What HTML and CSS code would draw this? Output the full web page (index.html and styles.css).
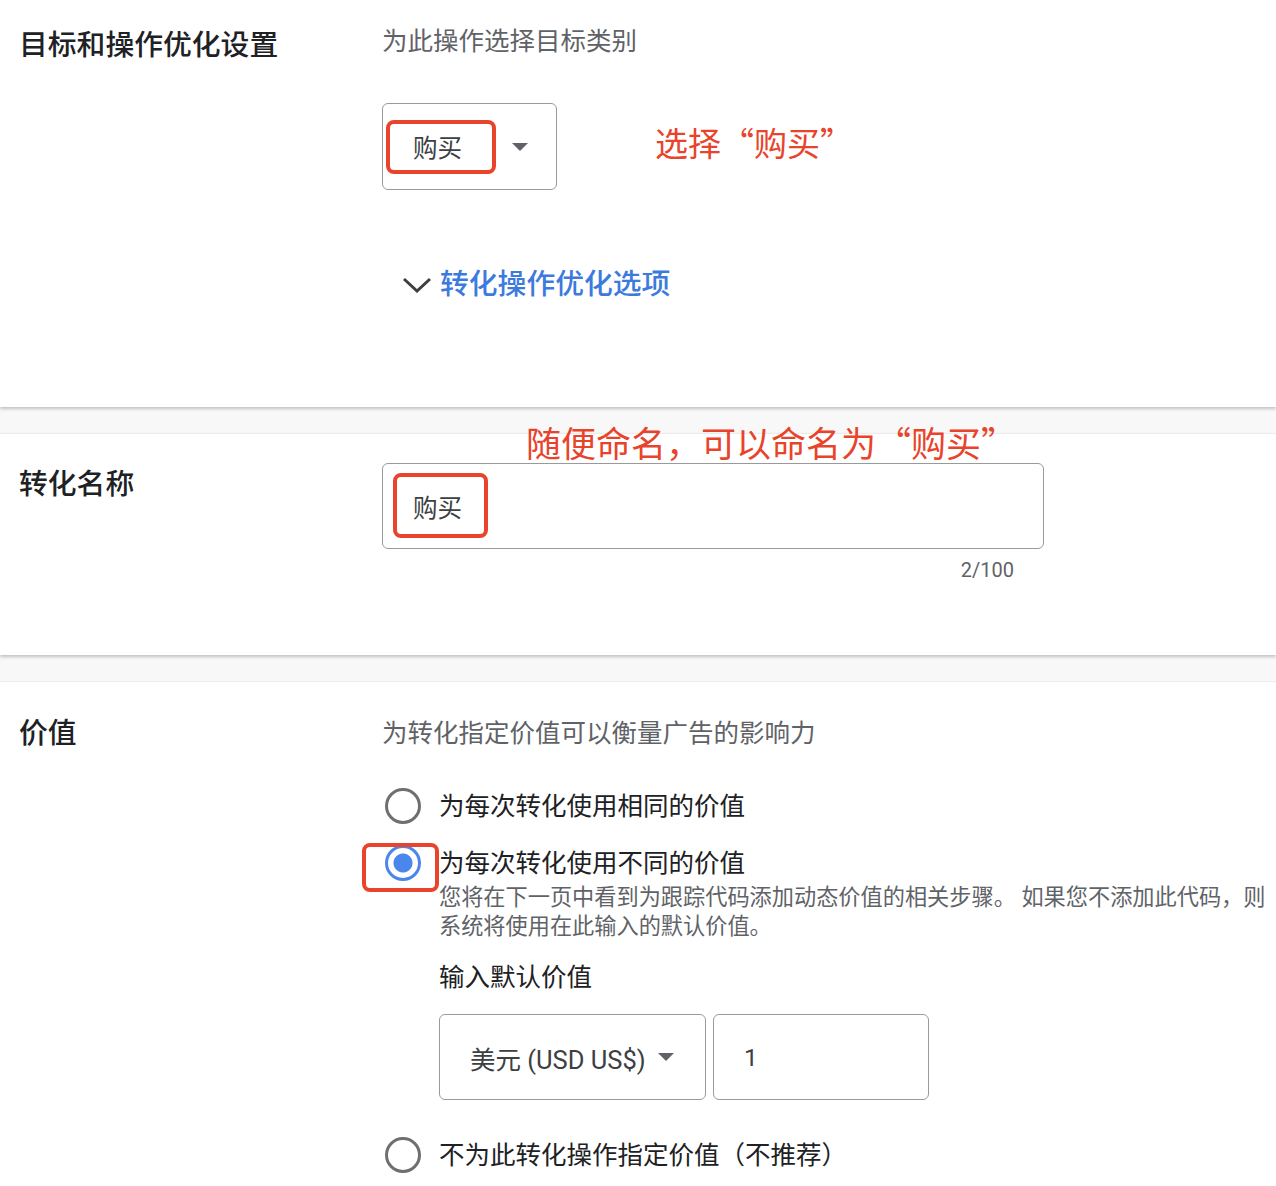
FILE: index.html
```html
<!DOCTYPE html>
<html>

<head>
    <title>转化操作设置</title>
    <meta charset="utf-8">
    <link rel="stylesheet" href="styles.css">
</head>

<body>
    <div class="page">
        <section class="card card-first">
            <div class="label">目标和操作优化设置</div>
            <div class="content">
                <div class="hint">为此操作选择目标类别</div>
                <div class="select select-goal">
                    <span class="select-text">购买</span>
                    <span class="caret"></span>
                    <span class="mark mark-goal"></span>
                    <span class="note note-goal">选择“购买”</span>
                </div>
                <div class="toggle">
                    <svg class="chevron" width="30" height="18" viewBox="0 0 30 18">
                        <path d="M2 3 L15 15 L28 3" fill="none" stroke="#3c4043" stroke-width="3" />
                    </svg>
                    <span class="toggle-text">转化操作优化选项</span>
                </div>
            </div>
        </section>

        <section class="card card-middle">
            <div class="label">转化名称</div>
            <div class="content">
                <div class="field field-name">
                    <span class="field-text">购买</span>
                    <span class="mark mark-name"></span>
                    <span class="note note-name">随便命名，可以命名为“购买”</span>
                </div>
                <div class="counter">2/100</div>
            </div>
        </section>

        <section class="card card-last">
            <div class="label">价值</div>
            <div class="content">
                <div class="hint hint-value">为转化指定价值可以衡量广告的影响力</div>

                <div class="option">
                    <span class="radio"></span>
                    <div class="option-body">
                        <div class="option-label">为每次转化使用相同的价值</div>
                    </div>
                </div>

                <div class="option option-second">
                    <span class="radio radio-on"></span>
                    <span class="mark mark-radio"></span>
                    <div class="option-body">
                        <div class="option-label">为每次转化使用不同的价值</div>
                        <div class="option-desc">您将在下一页中看到为跟踪代码添加动态价值的相关步骤。 如果您不添加此代码，则系统将使用在此输入的默认价值。</div>
                        <div class="sub-label">输入默认价值</div>
                        <div class="value-row">
                            <div class="select select-currency">
                                <span class="select-text">美元 (USD US$)</span>
                                <span class="caret"></span>
                            </div>
                            <div class="field field-value">
                                <span class="field-text">1</span>
                            </div>
                        </div>
                    </div>
                </div>

                <div class="option option-third">
                    <span class="radio"></span>
                    <div class="option-body">
                        <div class="option-label">不为此转化操作指定价值（不推荐）</div>
                    </div>
                </div>
            </div>
        </section>
    </div>
</body>

</html>
```

FILE: styles.css
```css
body {
    margin: 0;
    background-color: #f8f8f8;
    font-family: Roboto, "Noto Sans CJK SC", sans-serif;
    color: #202124;
    overflow: hidden;
}

.page {
    display: flex;
    flex-direction: column;
    gap: 26px;
    width: 1276px;
    height: 1186px;
}

.card {
    display: flex;
    background-color: #fff;
    padding: 30px 0 71px 19px;
    border-top: 1px solid #ececec;
    box-shadow: 0 2px 3px rgba(0, 0, 0, 0.22);
}

.card-first {
    padding-top: 24px;
    padding-bottom: 103px;
    border-top: none;
}

.card-middle {
    padding-top: 29px;
}

.card-last {
    flex: 1;
    box-shadow: none;
}

.label {
    width: 363px;
    flex-shrink: 0;
    font-size: 28.8px;
    line-height: 42px;
    font-weight: 500;
    color: #202124;
}

.content {
    flex: 1;
    display: flex;
    flex-direction: column;
    align-items: flex-start;
}

.hint {
    font-size: 25.5px;
    line-height: 34px;
    color: #5f6368;
}

.hint-value {
    line-height: 42px;
}

.select,
.field {
    position: relative;
    display: flex;
    align-items: center;
    box-sizing: border-box;
    border: 1px solid #9a9a9a;
    border-radius: 6px;
    background-color: #fff;
    padding-left: 30px;
}

.select-text,
.field-text {
    font-size: 24.5px;
    color: #3c4043;
    white-space: nowrap;
    flex-shrink: 0;
}

.caret {
    width: 0;
    height: 0;
    flex-shrink: 0;
    border-left: 8px solid transparent;
    border-right: 8px solid transparent;
    border-top: 8px solid #5f6368;
    margin-left: auto;
    margin-right: 28px;
}

.select-goal {
    width: 175px;
    height: 87px;
    margin-top: 45px;
}

.toggle {
    display: flex;
    align-items: center;
    margin-top: 74px;
    margin-left: 20px;
}

.chevron {
    margin-right: 8px;
    margin-top: 2px;
}

.toggle-text {
    font-size: 28.8px;
    line-height: 40px;
    font-weight: 500;
    color: #3d7ade;
}

.field-name {
    width: 662px;
    height: 86px;
}

.counter {
    width: 632px;
    text-align: right;
    margin-top: 7px;
    font-size: 20px;
    line-height: 28px;
    color: #5f6368;
}

/* annotations drawn over the form */
.mark {
    position: absolute;
    box-sizing: border-box;
    border: 4px solid #e8432b;
    border-radius: 8px;
}

.mark-goal {
    left: 3px;
    top: 16px;
    width: 110px;
    height: 54px;
}

.mark-name {
    left: 10px;
    top: 9px;
    width: 95px;
    height: 65px;
}

.mark-radio {
    left: -20px;
    top: -2px;
    width: 77px;
    height: 49px;
}

.note {
    position: absolute;
    white-space: nowrap;
    font-family: "Noto Sans CJK SC", sans-serif;
    font-size: 35px;
    line-height: 40px;
    color: #e8432b;
}

.note-goal {
    left: 272px;
    top: 18px;
    font-size: 33px;
}

.note-name {
    left: 143px;
    top: -42px;
}

.option {
    position: relative;
    display: flex;
    align-items: flex-start;
    margin-top: 34px;
}

.option-second {
    margin-top: 21px;
}

.option-third {
    margin-top: 37px;
}

.radio {
    box-sizing: border-box;
    width: 36px;
    height: 36px;
    margin-left: 3px;
    margin-right: 18px;
    border: 3px solid #6f6f6f;
    border-radius: 50%;
    flex-shrink: 0;
}

.radio-on {
    border-color: #4a86ec;
    background: radial-gradient(circle, #4a86ec 0, #4a86ec 9px, #fff 10px);
}

.option-label {
    font-size: 25.5px;
    line-height: 36px;
    color: #202124;
}

.option-desc {
    width: 832px;
    margin-top: 2px;
    font-size: 22.2px;
    line-height: 29px;
    color: #5f6368;
}

.sub-label {
    margin-top: 19px;
    font-size: 25.5px;
    line-height: 34px;
    color: #202124;
}

.value-row {
    display: flex;
    gap: 7px;
    margin-top: 20px;
}

.select-currency {
    width: 267px;
    height: 86px;
}

.select-currency .select-text {
    font-size: 25.5px;
}

.select-currency .caret {
    margin-left: 12px;
}

.field-value {
    width: 216px;
    height: 86px;
}
```
